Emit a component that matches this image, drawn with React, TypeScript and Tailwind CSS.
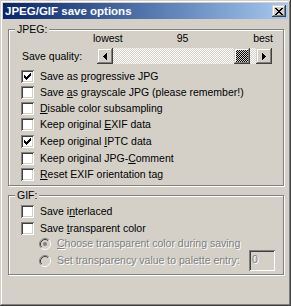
import React from "react";

const raised =
  "shadow-[inset_-1px_-1px_#404040,inset_1px_1px_#D4D0C8,inset_-2px_-2px_#808080,inset_2px_2px_#ffffff]";

function Check({ checked }: { checked?: boolean }) {
  return (
    <div className="w-[13px] h-[13px] shrink-0 p-[3px] bg-white shadow-[inset_1px_1px_#808080,inset_-1px_-1px_#ffffff,inset_2px_2px_#404040,inset_-2px_-2px_#D4D0C8]">
      {checked && (
        <svg width="7" height="7" viewBox="0 0 7 7" shapeRendering="crispEdges" className="block">
          <path
            d="M6 0h1v1h-1zM5 1h2v1h-2zM0 2h1v1h-1zM4 2h3v1h-3zM0 3h2v1h-2zM3 3h3v1h-3zM0 4h5v1h-5zM1 5h3v1h-3zM2 6h1v1h-1z"
            fill="#000"
          />
        </svg>
      )}
    </div>
  );
}

function Radio({ checked }: { checked?: boolean }) {
  return (
    <svg width="12" height="12" viewBox="0 0 12 12" className="block shrink-0">
      <circle cx="6" cy="6" r="4.2" fill="#D4D0C8" />
      <path d="M2.11 9.89 A5.5 5.5 0 0 1 9.89 2.11" stroke="#808080" fill="none" strokeWidth="1" />
      <path d="M9.89 2.11 A5.5 5.5 0 0 1 2.11 9.89" stroke="#ffffff" fill="none" strokeWidth="1" />
      <path d="M2.82 9.18 A4.5 4.5 0 0 1 9.18 2.82" stroke="#404040" fill="none" strokeWidth="1" />
      <path d="M9.18 2.82 A4.5 4.5 0 0 1 2.82 9.18" stroke="#D4D0C8" fill="none" strokeWidth="1" />
      {checked && <circle cx="6" cy="6" r="2" fill="#808080" />}
    </svg>
  );
}

function Row({ mt, checked, children }: { mt: string; checked?: boolean; children: React.ReactNode }) {
  return (
    <div className={`flex items-center h-[13px] pl-[12px] gap-[6px] ${mt}`}>
      <Check checked={checked} />
      <span className="leading-[13px] whitespace-nowrap">{children}</span>
    </div>
  );
}

export default function App() {
  return (
    <div
      className={`w-[291px] h-[306px] bg-[#D4D0C8] p-[3px] flex flex-col text-[10.5px] text-black font-['Liberation_Sans',Arial,sans-serif] ${raised}`}
    >
      {/* Title bar */}
      <div className="h-[16px] flex items-center pl-[2px] bg-linear-to-r from-[#0A246A] to-[#A6CAF0]">
        <span className="text-white font-bold text-[11.5px] leading-[14px] whitespace-nowrap">
          JPEG/GIF save options
        </span>
        <div className={`ml-auto mr-[2px] w-[14px] h-[12px] bg-[#D4D0C8] flex items-center justify-center ${raised}`}>
          <svg width="8" height="7" viewBox="0 0 8 7" shapeRendering="crispEdges" className="block">
            <path
              d="M0 0h2v1h-2zM6 0h2v1h-2zM1 1h2v1h-2zM5 1h2v1h-2zM2 2h4v1h-4zM3 3h2v1h-2zM2 4h4v1h-4zM1 5h2v1h-2zM5 5h2v1h-2zM0 6h2v1h-2zM6 6h2v1h-2z"
              fill="#000"
            />
          </svg>
        </div>
      </div>

      {/* JPEG group */}
      <div className="relative mt-[10px] ml-[5px] w-[276px] h-[157px] border border-[#808080] shadow-[inset_1px_1px_#ffffff,1px_1px_#ffffff] flex flex-col">
        <span className="absolute top-[-7px] left-[6px] px-[2px] bg-[#D4D0C8] leading-[13px]">JPEG:</span>
        <div className="flex h-[13px] mt-[2px] pl-[84px] w-[264px] leading-[13px]">
          <span>lowest</span>
          <span className="ml-[54px]">95</span>
          <span className="ml-auto">best</span>
        </div>
        <div className="flex items-center h-[16px] mt-[3px]">
          <span className="w-[88px] pl-[13px] leading-[13px] whitespace-nowrap">Save quality:</span>
          <div className="flex w-[175px] h-[16px]">
            <div className={`w-[16px] h-[16px] shrink-0 bg-[#D4D0C8] flex items-center justify-center ${raised}`}>
              <svg width="4" height="7" viewBox="0 0 4 7" shapeRendering="crispEdges" className="block">
                <path d="M0 3h1v1h-1zM1 2h1v3h-1zM2 1h1v5h-1zM3 0h1v7h-1z" fill="#000" />
              </svg>
            </div>
            <div className="flex-1 h-[16px] pl-[121px] bg-[image:repeating-conic-gradient(#ffffff_0%_25%,#D4D0C8_0%_50%)] bg-[length:2px_2px]">
              <div
                className={`w-[16px] h-[16px] bg-[image:repeating-conic-gradient(#000000_0%_25%,#D4D0C8_0%_50%)] bg-[length:2px_2px] ${raised}`}
              />
            </div>
            <div className={`w-[16px] h-[16px] shrink-0 bg-[#D4D0C8] flex items-center justify-center ${raised}`}>
              <svg width="4" height="7" viewBox="0 0 4 7" shapeRendering="crispEdges" className="block">
                <path d="M3 3h1v1h-1zM2 2h1v3h-1zM1 1h1v5h-1zM0 0h1v7h-1z" fill="#000" />
              </svg>
            </div>
          </div>
        </div>
        <Row mt="mt-[6px]" checked>
          Save as <u>p</u>rogressive JPG
        </Row>
        <Row mt="mt-[3px]">
          Save <u>a</u>s grayscale JPG (please remember!)
        </Row>
        <Row mt="mt-[3px]">
          <u>D</u>isable color subsampling
        </Row>
        <Row mt="mt-[3px]">
          Keep original <u>E</u>XIF data
        </Row>
        <Row mt="mt-[4px]" checked>
          Keep original <u>I</u>PTC data
        </Row>
        <Row mt="mt-[4px]">
          Keep original JPG-<u>C</u>omment
        </Row>
        <Row mt="mt-[3px]">
          <u>R</u>eset EXIF orientation tag
        </Row>
      </div>

      {/* GIF group */}
      <div className="relative mt-[9px] ml-[5px] w-[276px] h-[80px] border border-[#808080] shadow-[inset_1px_1px_#ffffff,1px_1px_#ffffff] flex flex-col">
        <span className="absolute top-[-7px] left-[6px] px-[2px] bg-[#D4D0C8] leading-[13px]">GIF:</span>
        <Row mt="mt-[9px]">
          Save i<u>n</u>terlaced
        </Row>
        <Row mt="mt-[4px]">
          Save <u>t</u>ransparent color
        </Row>
        <div className="flex items-center h-[13px] mt-[2px] pl-[30px] gap-[6px] text-[#808080] [text-shadow:1px_1px_#ffffff]">
          <Radio checked />
          <span className="leading-[13px] whitespace-nowrap">
            <u>C</u>hoose transparent color during saving
          </span>
        </div>
        <div className="flex items-center h-[21px] pl-[30px] pr-[8px] gap-[6px] text-[#808080]">
          <Radio />
          <span className="leading-[13px] whitespace-nowrap [text-shadow:1px_1px_#ffffff]">
            Set transparency value to palette entry:
          </span>
          <div className="ml-auto w-[26px] h-[21px] bg-[#D4D0C8] pl-[3px] pt-[3px] leading-[13px] shadow-[inset_1px_1px_#808080,inset_-1px_-1px_#ffffff,inset_2px_2px_#404040,inset_-2px_-2px_#D4D0C8] [text-shadow:1px_1px_#ffffff]">
            0
          </div>
        </div>
      </div>
    </div>
  );
}
